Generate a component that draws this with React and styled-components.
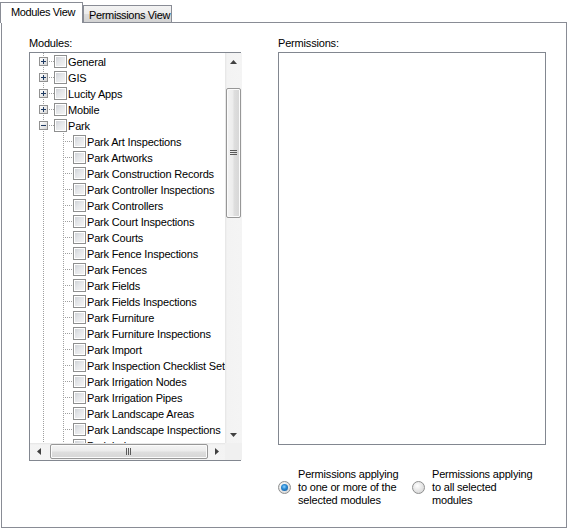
import React from 'react';
import styled, { createGlobalStyle, css } from 'styled-components';

const GlobalStyle = createGlobalStyle`
  html, body { margin: 0; padding: 0; background: #fff; }
  body {
    font-family: "Liberation Sans", Arial, sans-serif;
    font-size: 11px;
    letter-spacing: -0.18px;
    color: #000;
  }
`;

const Window = styled.div`
  width: 568px;
  height: 529px;
  background: #fff;
  overflow: hidden;
`;

const TabStrip = styled.div`
  display: flex;
  align-items: flex-end;
  height: 22px;
`;

const Tab = styled.div`
  box-sizing: border-box;
  border: 1px solid #898c95;
  border-bottom: none;
  display: flex;
  align-items: center;
  white-space: nowrap;
  letter-spacing: -0.35px;
  ${(p) =>
    p.$active
      ? css`
          width: 83px;
          height: 21px;
          margin-bottom: -1px;
          padding: 0 0 2px 10px;
          background: #fff;
          position: relative;
          z-index: 1;
        `
      : css`
          width: 89px;
          height: 17px;
          padding: 1px 0 0 5px;
          background: linear-gradient(#f3f3f3 0%, #ebebeb 50%, #dddddd 50%, #d3d3d3 100%);
        `}
`;

const Panel = styled.div`
  box-sizing: border-box;
  margin-left: 1px;
  width: 566px;
  height: 506px;
  border: 1px solid #898c95;
  padding: 14px 0 0 27px;
  display: flex;
  gap: 37px;
`;

const Column = styled.div`
  display: flex;
  flex-direction: column;
  width: ${(p) => p.$w}px;
`;

const Label = styled.div`
  line-height: 13px;
  height: 13px;
  margin-bottom: 2px;
`;

const TreeBox = styled.div`
  box-sizing: border-box;
  width: 212px;
  height: 409px;
  border: 1px solid #828790;
  display: grid;
  grid-template-columns: 1fr 17px;
  grid-template-rows: 1fr 17px;
  background: #fff;
`;

const Viewport = styled.div`
  overflow: hidden;
  background: #fff;
`;

const Row = styled.div`
  display: flex;
  align-items: center;
  height: 16px;
  white-space: nowrap;
`;

const GuideSvg = styled.svg`
  flex: none;
  display: block;
`;

const Check = styled.span`
  flex: none;
  box-sizing: border-box;
  width: 13px;
  height: 13px;
  border: 1px solid #8e8f8f;
  background: linear-gradient(135deg, #cbced3 0%, #e4e6e9 45%, #f7f7f7 100%);
  box-shadow: inset 0 0 0 1px #fff;
`;

const ItemText = styled.span`
  line-height: 14px;
  padding: 2px 0 0 1px;
`;

const VScroll = styled.div`
  display: flex;
  flex-direction: column;
  background: linear-gradient(to right, #e4e4e4 0, #f3f3f3 2px, #f4f4f4 100%);
`;

const HScroll = styled.div`
  display: flex;
  background: linear-gradient(to bottom, #e4e4e4 0, #f3f3f3 2px, #f4f4f4 100%);
`;

const Corner = styled.div`
  background: #f0f0f0;
`;

const ArrowBtn = styled.div`
  flex: none;
  width: 17px;
  height: 17px;
  display: flex;
  align-items: center;
  justify-content: center;
`;

const Thumb = styled.div`
  flex: none;
  box-sizing: border-box;
  border: 1px solid #979797;
  border-radius: 2px;
  display: flex;
  align-items: center;
  justify-content: center;
  box-shadow: inset 0 0 0 1px #fbfbfb;
  ${(p) =>
    p.$vertical
      ? css`
          width: 15px;
          height: 130px;
          margin: 18px 0 0 1px;
          background: linear-gradient(to right, #f4f4f4 0%, #ececec 45%, #dedede 55%, #d6d6d6 100%);
        `
      : css`
          width: 158px;
          height: 15px;
          margin: 1px 0 0 3px;
          background: linear-gradient(to bottom, #f4f4f4 0%, #ececec 45%, #dedede 55%, #d6d6d6 100%);
        `}
`;

const Spacer = styled.div`
  flex: 1;
`;

const PermBox = styled.div`
  box-sizing: border-box;
  width: 268px;
  height: 393px;
  border: 1px solid #828790;
  background: #fff;
`;

const RadioGroup = styled.div`
  display: flex;
  align-items: center;
  margin-top: 23px;
`;

const RadioOption = styled.label`
  display: flex;
  align-items: center;
  gap: 7px;
  width: ${(p) => (p.$w ? `${p.$w}px` : 'auto')};
`;

const RadioCircle = styled.span`
  flex: none;
  box-sizing: border-box;
  width: 13px;
  height: 13px;
  border-radius: 50%;
  border: 1px solid #8e8f8f;
  display: flex;
  align-items: center;
  justify-content: center;
  background: radial-gradient(circle at 40% 35%, #ffffff 0%, #e8e8e8 45%, #cfcfcf 100%);
  &::after {
    content: '';
    display: ${(p) => (p.$checked ? 'block' : 'none')};
    width: 7px;
    height: 7px;
    border-radius: 50%;
    background: radial-gradient(circle at 45% 40%, #8fd3ff 0%, #2a8ad4 40%, #0d4f91 100%);
  }
`;

const RadioText = styled.span`
  line-height: 13px;
`;

const DOT = '#a0a0a0';

function dotsV(x, y0, y1, skip) {
  const r = [];
  for (let y = y0; y <= y1; y += 2) {
    if (skip && y >= skip[0] && y <= skip[1]) continue;
    r.push(<rect key={`v${x}-${y}`} x={x} y={y} width={1} height={1} fill={DOT} />);
  }
  return r;
}
function dotsH(y, x0, x1) {
  const r = [];
  for (let x = x0; x <= x1; x += 2) {
    r.push(<rect key={`h${y}-${x}`} x={x} y={y} width={1} height={1} fill={DOT} />);
  }
  return r;
}

function Expander({ open }) {
  return (
    <g>
      <rect x={9} y={4} width={9} height={9} fill="#919191" />
      <rect x={10} y={5} width={7} height={7} fill="url(#expGrad)" />
      <rect x={11} y={8} width={5} height={1} fill="#1e3a62" />
      {!open && <rect x={13} y={6} width={1} height={5} fill="#1e3a62" />}
    </g>
  );
}

function RootGuide({ open }) {
  return (
    <GuideSvg width={24} height={16} shapeRendering="crispEdges">
      <defs>
        <linearGradient id="expGrad" x1="0" y1="0" x2="1" y2="1">
          <stop offset="0" stopColor="#ffffff" />
          <stop offset="1" stopColor="#d6d6d6" />
        </linearGradient>
      </defs>
      {dotsV(13, 0, 15, [3, 13])}
      {dotsH(8, 19, 23)}
      <Expander open={open} />
    </GuideSvg>
  );
}

function ChildGuide() {
  return (
    <GuideSvg width={43} height={16} shapeRendering="crispEdges">
      {dotsV(13, 0, 15)}
      {dotsV(33, 0, 15)}
      {dotsH(8, 35, 42)}
    </GuideSvg>
  );
}

function TreeItem({ text, child, open }) {
  return (
    <Row>
      {child ? <ChildGuide /> : <RootGuide open={open} />}
      <Check />
      <ItemText>{text}</ItemText>
    </Row>
  );
}

function Arrow({ dir }) {
  const pts = {
    up: '0,4 3.5,0 7,4',
    down: '0,0 3.5,4 7,0',
    left: '4,0 0,3.5 4,7',
    right: '0,0 4,3.5 0,7',
  }[dir];
  const vertical = dir === 'up' || dir === 'down';
  return (
    <svg width={vertical ? 7 : 4} height={vertical ? 4 : 7}>
      <polygon points={pts} fill="#404040" />
    </svg>
  );
}

function Grip({ vertical }) {
  const lines = [0, 2, 4];
  return (
    <svg width={vertical ? 7 : 6} height={vertical ? 6 : 7} shapeRendering="crispEdges">
      {lines.map((o) =>
        vertical ? (
          <rect key={o} x={0} y={o} width={7} height={1} fill="#5a5a5a" />
        ) : (
          <rect key={o} x={o} y={0} width={1} height={7} fill="#5a5a5a" />
        )
      )}
    </svg>
  );
}

const roots = ['General', 'GIS', 'Lucity Apps', 'Mobile'];
const children = [
  'Park Art Inspections',
  'Park Artworks',
  'Park Construction Records',
  'Park Controller Inspections',
  'Park Controllers',
  'Park Court Inspections',
  'Park Courts',
  'Park Fence Inspections',
  'Park Fences',
  'Park Fields',
  'Park Fields Inspections',
  'Park Furniture',
  'Park Furniture Inspections',
  'Park Import',
  'Park Inspection Checklist Setup',
  'Park Irrigation Nodes',
  'Park Irrigation Pipes',
  'Park Landscape Areas',
  'Park Landscape Inspections',
  'Park Lakes',
];

export default function App() {
  return (
    <Window>
      <GlobalStyle />
      <TabStrip>
        <Tab $active>Modules View</Tab>
        <Tab>Permissions View</Tab>
      </TabStrip>
      <Panel>
        <Column $w={212}>
          <Label>Modules:</Label>
          <TreeBox>
            <Viewport>
              {roots.map((r) => (
                <TreeItem key={r} text={r} />
              ))}
              <TreeItem text="Park" open />
              {children.map((c) => (
                <TreeItem key={c} text={c} child />
              ))}
            </Viewport>
            <VScroll>
              <ArrowBtn>
                <Arrow dir="up" />
              </ArrowBtn>
              <Thumb $vertical>
                <Grip vertical />
              </Thumb>
              <Spacer />
              <ArrowBtn>
                <Arrow dir="down" />
              </ArrowBtn>
            </VScroll>
            <HScroll>
              <ArrowBtn>
                <Arrow dir="left" />
              </ArrowBtn>
              <Thumb>
                <Grip />
              </Thumb>
              <Spacer />
              <ArrowBtn>
                <Arrow dir="right" />
              </ArrowBtn>
            </HScroll>
            <Corner />
          </TreeBox>
        </Column>
        <Column $w={268}>
          <Label>Permissions:</Label>
          <PermBox />
          <RadioGroup>
            <RadioOption $w={134}>
              <RadioCircle $checked />
              <RadioText>
                Permissions applying
                <br />
                to one or more of the
                <br />
                selected modules
              </RadioText>
            </RadioOption>
            <RadioOption>
              <RadioCircle />
              <RadioText>
                Permissions applying
                <br />
                to all selected
                <br />
                modules
              </RadioText>
            </RadioOption>
          </RadioGroup>
        </Column>
      </Panel>
    </Window>
  );
}
